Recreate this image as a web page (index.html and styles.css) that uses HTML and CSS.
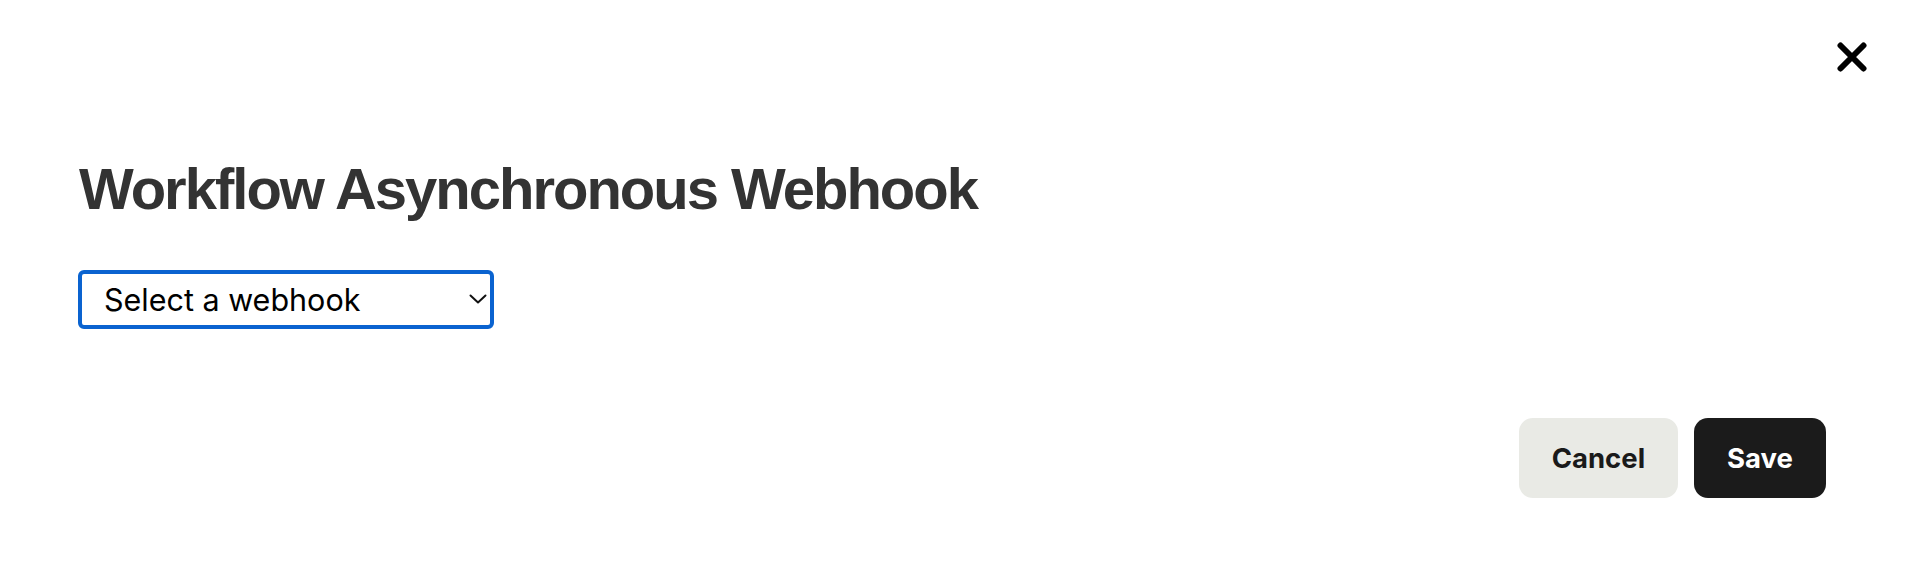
FILE: index.html
```html
<!DOCTYPE html>
<html lang="en">
<head>
<meta charset="utf-8">
<title>Workflow Asynchronous Webhook</title>
<link rel="stylesheet" href="styles.css">
</head>
<body>
<div class="dialog">
  <div class="dialog-header">
    <button class="close-btn" type="button" aria-label="Close">
      <svg width="30" height="30" viewBox="0 0 30 30" aria-hidden="true">
        <path d="M3.5 3.5 L26.5 26.5 M26.5 3.5 L3.5 26.5" stroke="#000" stroke-width="6" stroke-linecap="round" fill="none"/>
      </svg>
    </button>
  </div>
  <h1 class="dialog-title">Workflow Asynchronous Webhook</h1>
  <div class="select-wrap">
    <select class="webhook-select">
      <option>Select a webhook</option>
    </select>
    <svg class="chevron" width="18" height="10" viewBox="0 0 18 10" aria-hidden="true">
      <path d="M1.5 1.5 L9 8.5 L16.5 1.5" stroke="#111" stroke-width="2" fill="none" stroke-linecap="round" stroke-linejoin="round"/>
    </svg>
  </div>
  <div class="dialog-footer">
    <button class="btn btn-secondary" type="button">Cancel</button>
    <button class="btn btn-primary" type="button">Save</button>
  </div>
</div>
</body>
</html>
```
FILE: styles.css
```css
html, body {
  margin: 0;
  padding: 0;
  background: #ffffff;
}

body {
  font-family: Inter, "Liberation Sans", Arial, sans-serif;
}

.dialog {
  display: flex;
  flex-direction: column;
  align-items: flex-start;
  padding: 37px 40px 0 78px;
}

.dialog-header {
  align-self: stretch;
  display: flex;
  justify-content: flex-end;
}

.close-btn {
  width: 40px;
  height: 40px;
  padding: 0;
  border: 0;
  background: transparent;
  display: flex;
  align-items: center;
  justify-content: center;
  cursor: pointer;
}

.dialog-title {
  margin: 79px 0 0 1px;
  font-family: "Liberation Sans", Arial, Helvetica, sans-serif;
  font-weight: 700;
  font-size: 58px;
  line-height: 66px;
  letter-spacing: -2px;
  color: #333333;
}

.select-wrap {
  position: relative;
  margin-top: 48px;
}

.webhook-select {
  -webkit-appearance: none;
  appearance: none;
  box-sizing: border-box;
  width: 416px;
  height: 59px;
  margin: 0;
  padding: 0 40px 0 22px;
  border: 4px solid #0a63d0;
  border-radius: 6px;
  background: #ffffff;
  font-family: Inter, "Liberation Sans", Arial, sans-serif;
  font-size: 30.5px;
  color: #000000;
  outline: none;
}

.chevron {
  position: absolute;
  right: 7px;
  top: 24px;
  pointer-events: none;
}

.dialog-footer {
  align-self: stretch;
  display: flex;
  justify-content: flex-end;
  gap: 16px;
  margin-top: 89px;
  margin-right: 46px;
}

.btn {
  height: 80px;
  padding: 0 33px;
  border: 0;
  border-radius: 14px;
  font-family: Inter, "Liberation Sans", Arial, sans-serif;
  font-weight: 700;
  font-size: 27.5px;
  cursor: pointer;
}

.btn-secondary {
  background: #e9eae5;
  color: #1a1a1a;
}

.btn-primary {
  background: #1b1b1b;
  color: #ffffff;
}
```
